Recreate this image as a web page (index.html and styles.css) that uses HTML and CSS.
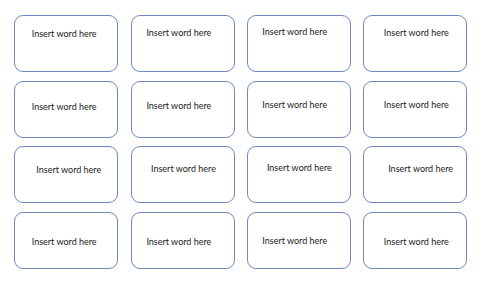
FILE: index.html
```html
<!DOCTYPE html>
<html>
<head>
<meta charset="utf-8">
<link rel="stylesheet" href="styles.css">
</head>
<body>
<main class="grid">
  <div class="card a1">Insert word here</div>
  <div class="card a2">Insert word here</div>
  <div class="card a3">Insert word here</div>
  <div class="card a4">Insert word here</div>
  <div class="card b1">Insert word here</div>
  <div class="card b2">Insert word here</div>
  <div class="card b3">Insert word here</div>
  <div class="card b4">Insert word here</div>
  <div class="card c1">Insert word here</div>
  <div class="card c2">Insert word here</div>
  <div class="card c3">Insert word here</div>
  <div class="card c4">Insert word here</div>
  <div class="card d1">Insert word here</div>
  <div class="card d2">Insert word here</div>
  <div class="card d3">Insert word here</div>
  <div class="card d4">Insert word here</div>
</main>
</body>
</html>
```

FILE: styles.css
```css
html, body {
  margin: 0;
  background: #ffffff;
}
.grid {
  display: grid;
  grid-template-columns: repeat(4, 104px);
  grid-auto-rows: 57px;
  column-gap: 12.4px;
  row-gap: 8.7px;
  padding: 15px 0 0 14.3px;
}
.card {
  box-sizing: border-box;
  border: 1px solid #6f88c0;
  border-radius: 9px;
  font-family: Lato, "Open Sans", sans-serif;
  font-size: 9px;
  line-height: 12px;
  color: #1a1a1a;
  white-space: nowrap;
}
.a1 { padding: 12.1px 0 0 16.4px; }
.a2 { padding: 11.1px 0 0 14.7px; }
.a3 { padding: 10.1px 0 0 14.2px; }
.a4 { padding: 11.1px 0 0 19.4px; }
.b1 { padding: 19.2px 0 0 16.4px; }
.b2 { padding: 18.2px 0 0 14.7px; }
.b3 { padding: 17.2px 0 0 14.2px; }
.b4 { padding: 17.8px 0 0 19.4px; }
.c1 { padding: 17.1px 0 0 21px; }
.c2 { padding: 15.5px 0 0 19.3px; }
.c3 { padding: 14.5px 0 0 18.8px; }
.c4 { padding: 15.5px 0 0 23.7px; }
.d1 { padding: 23.1px 0 0 16.4px; }
.d2 { padding: 22.5px 0 0 14.7px; }
.d3 { padding: 21.8px 0 0 14.2px; }
.d4 { padding: 22.8px 0 0 19.4px; }
```
